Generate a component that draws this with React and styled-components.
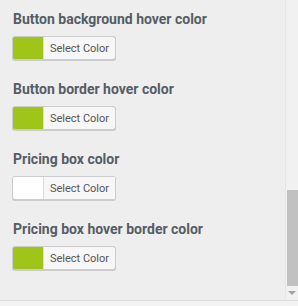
import styled, { createGlobalStyle } from "styled-components";

const GlobalStyle = createGlobalStyle`
  html, body {
    margin: 0;
    padding: 0;
    background: #eeeeee;
  }
  body {
    font-family: Roboto, "Liberation Sans", sans-serif;
  }
`;

const controls = [
  { label: "Button background hover color", color: "#a0c51a" },
  { label: "Button border hover color", color: "#a0c51a" },
  { label: "Pricing box color", color: "#ffffff" },
  { label: "Pricing box hover border color", color: "#a0c51a" },
];

const Frame = styled.div`
  width: 298px;
  height: 306px;
  display: flex;
  flex-direction: column;
  overflow: hidden;
`;

const Viewport = styled.div`
  display: flex;
  height: 300px;
`;

const Panel = styled.div`
  flex: 1;
  padding: 7px 0 0 13px;
`;

const Control = styled.div`
  margin-bottom: 17px;
`;

const Title = styled.span`
  display: block;
  font-size: 14px;
  line-height: 24px;
  font-weight: 700;
  color: #555d66;
  margin-bottom: 5px;
`;

const ColorButton = styled.button`
  display: flex;
  align-items: stretch;
  height: 24px;
  width: 104px;
  margin-left: -1px;
  padding: 0;
  border: 1px solid #cccccc;
  border-radius: 3px;
  box-shadow: 0 1px 0 #cccccc;
  background: ${(p) => p.$color};
  cursor: pointer;
  overflow: hidden;
`;

const Swatch = styled.span`
  width: 30px;
  flex-shrink: 0;
`;

const ButtonText = styled.span`
  flex: 1;
  display: flex;
  align-items: center;
  justify-content: center;
  background: #f7f7f7;
  border-left: 1px solid #dddddd;
  font-family: Roboto, "Liberation Sans", sans-serif;
  font-size: 11px;
  color: #555555;
`;

const Track = styled.div`
  width: 13px;
  display: flex;
  flex-direction: column;
  align-items: center;
  background: #f1f1f1;
  border-left: 1px solid #e6e6e6;
  padding-top: 190px;
  box-sizing: border-box;
`;

const Thumb = styled.div`
  width: 11px;
  height: 96px;
  background: #c1c1c1;
`;

const Arrow = styled.div`
  margin-top: 5px;
  width: 0;
  height: 0;
  border-left: 4px solid transparent;
  border-right: 4px solid transparent;
  border-top: 4px solid #a3a3a3;
`;

const Footer = styled.div`
  flex: 1;
  border-top: 1px solid #dddddd;
  background: #f3f3f3;
`;

export default function App() {
  return (
    <>
      <GlobalStyle />
      <Frame>
        <Viewport>
          <Panel>
            {controls.map((c) => (
              <Control key={c.label}>
                <Title>{c.label}</Title>
                <ColorButton $color={c.color}>
                  <Swatch />
                  <ButtonText>Select Color</ButtonText>
                </ColorButton>
              </Control>
            ))}
          </Panel>
          <Track>
            <Thumb />
            <Arrow />
          </Track>
        </Viewport>
        <Footer />
      </Frame>
    </>
  );
}
